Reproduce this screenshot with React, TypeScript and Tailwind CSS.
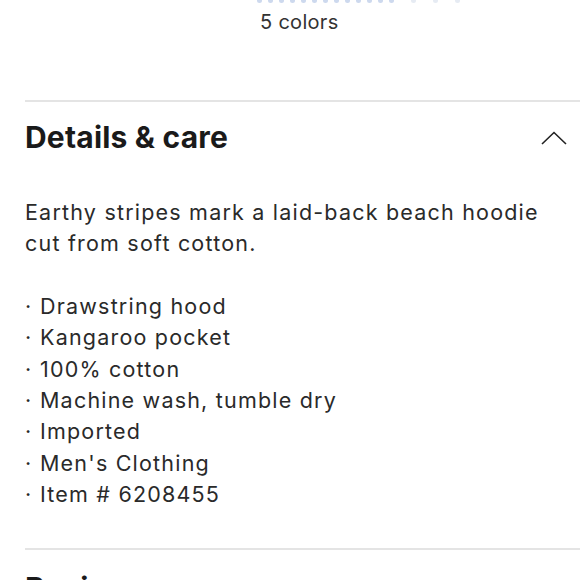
import React from "react";

const items = [
  "Drawstring hood",
  "Kangaroo pocket",
  "100% cotton",
  "Machine wash, tumble dry",
  "Imported",
  "Men's Clothing",
  "Item # 6208455",
];

export default function App() {
  return (
    <div className="w-[580px] h-[580px] overflow-hidden bg-white text-[#1f1f1f]" style={{ fontFamily: "Inter, 'Noto Sans', sans-serif" }}>
      <div className="flex justify-start pl-[257px] gap-[6px] h-[4px]">
        {Array.from({ length: 20 }).map((_, i) => (
          <div key={i} className={`w-[5px] h-[3px] rounded-b-full ${i < 13 ? "bg-[#cdd9ee]" : i % 2 === 0 ? "bg-[#e6ebf3]" : "bg-transparent"}`} />
        ))}
      </div>
      <div className="pl-[260px] mt-[7px] text-[20px] leading-[22px] tracking-[0.3px] text-[#333]">5 colors</div>
      <div className="ml-[25px] mt-[67px] h-[2px] bg-[#e4e4e4]" />
      <div className="ml-[25px] mr-[13px] mt-[17px] flex items-center justify-between">
        <div className="text-[30px] leading-[36px] font-bold tracking-[0.2px] text-[#1a1a1a]">Details &amp; care</div>
        <svg width="26" height="14" viewBox="0 0 26 14" fill="none" className="mt-[2px]">
          <path d="M1 13 L13 1.5 L25 13" stroke="#222" strokeWidth="1.6" />
        </svg>
      </div>
      <div className="ml-[25px] mt-[42px] text-[21.5px] leading-[31.4px] text-[#2a2a2a] tracking-[1.2px]">
        <p>Earthy stripes mark a laid-back beach hoodie<br />cut from soft cotton.</p>
        <ul className="mt-[31px]">
          {items.map((t) => (
            <li key={t} className="flex">
              <span className="w-[15px]">·</span>
              <span>{t}</span>
            </li>
          ))}
        </ul>
      </div>
      <div className="ml-[25px] mt-[37px] h-[2px] bg-[#e4e4e4]" />
      <div className="ml-[25px] mt-[20px] text-[30px] leading-[36px] font-bold tracking-[0.2px] text-[#1a1a1a]">Reviews</div>
    </div>
  );
}
